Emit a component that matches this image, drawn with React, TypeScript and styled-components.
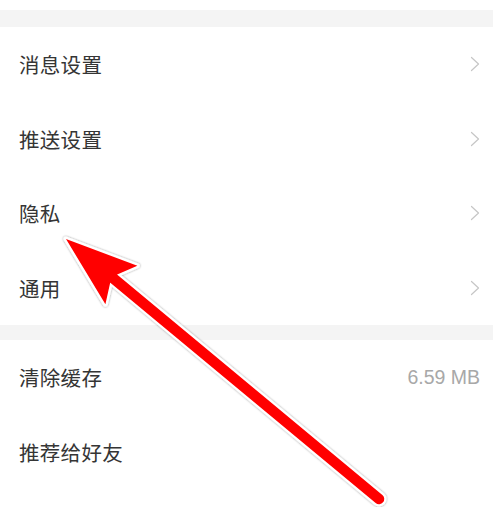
import React, { FC } from "react";
import styled, { createGlobalStyle } from "styled-components";

const GlobalStyle = createGlobalStyle`
  html, body {
    margin: 0;
    padding: 0;
    background: #ffffff;
  }
  body {
    font-family: "Noto Sans CJK SC", "Noto Sans", "Liberation Sans", sans-serif;
    -webkit-font-smoothing: antialiased;
  }
`;

interface Item {
  label: string;
  value?: string;
}

const groups: Item[][] = [
  [{ label: "消息设置" }, { label: "推送设置" }, { label: "隐私" }, { label: "通用" }],
  [{ label: "清除缓存", value: "6.59 MB" }, { label: "推荐给好友" }],
];

const Chevron: FC = () => (
  <svg width="10" height="16" viewBox="0 0 10 16">
    <polyline
      points="1.5,1.5 8.5,8 1.5,14.5"
      fill="none"
      stroke="#c6c6c6"
      strokeWidth="1.2"
      strokeLinecap="round"
      strokeLinejoin="round"
    />
  </svg>
);

// red annotation arrow drawn over the list
const tip = { x: 66, y: 239 };
const tail = { x: 379, y: 499 };
const dx = tail.x - tip.x;
const dy = tail.y - tip.y;
const len = Math.hypot(dx, dy);
const ux = dx / len;
const uy = dy / len;
const nx = -uy;
const ny = ux;
const pt = (along: number, side: number) =>
  `${tip.x + ux * along + nx * side},${tip.y + uy * along + ny * side}`;
const headPoints = [
  pt(0, 0),
  pt(72, -25),
  pt(62, -5.5),
  pt(62, 5.5),
  pt(72, 25),
].join(" ");
const shaftStart = { x: tip.x + ux * 60, y: tip.y + uy * 60 };

const Arrow: FC = () => (
  <ArrowLayer width="493" height="507" viewBox="0 0 493 507">
    <defs>
      <filter id="shade" x="-10%" y="-10%" width="120%" height="120%">
        <feDropShadow dx="0" dy="0" stdDeviation="1.2" floodColor="#000" floodOpacity="0.45" />
      </filter>
    </defs>
    <g filter="url(#shade)">
      <line
        x1={shaftStart.x}
        y1={shaftStart.y}
        x2={tail.x}
        y2={tail.y}
        stroke="#ffffff"
        strokeWidth="15"
        strokeLinecap="round"
      />
      <polygon points={headPoints} fill="#ffffff" stroke="#ffffff" strokeWidth="5" strokeLinejoin="round" />
    </g>
    <line
      x1={shaftStart.x}
      y1={shaftStart.y}
      x2={tail.x}
      y2={tail.y}
      stroke="#ff0000"
      strokeWidth="10.5"
      strokeLinecap="round"
    />
    <polygon points={headPoints} fill="#ff0000" />
  </ArrowLayer>
);

const App: FC = () => (
  <>
    <GlobalStyle />
    <Page>
      <TopSpace />
      {groups.map((group, gi) => (
        <React.Fragment key={`group-${gi}`}>
          <Gap $height={gi === 0 ? 17 : 15} />
          <List>
            {group.map((item) => (
              <Row key={item.label}>
                <Label>{item.label}</Label>
                {item.value ? <Value>{item.value}</Value> : gi === 0 ? <Chevron /> : null}
              </Row>
            ))}
          </List>
        </React.Fragment>
      ))}
      <Arrow />
    </Page>
  </>
);

const Page = styled.div`
  position: relative;
  width: 493px;
  height: 507px;
  overflow: hidden;
  background: #ffffff;
`;

const TopSpace = styled.div`
  height: 10px;
  background: #ffffff;
`;

const Gap = styled.div<{ $height: number }>`
  height: ${(p) => p.$height}px;
  background: #f4f4f4;
`;

const List = styled.ul`
  margin: 0;
  padding: 0;
  list-style: none;
  background: #ffffff;
`;

const Row = styled.li`
  height: 74.5px;
  display: flex;
  align-items: center;
  justify-content: space-between;
  padding: 0 13px 0 19px;
`;

const Label = styled.span`
  font-size: 20.5px;
  color: #353535;
  letter-spacing: 0.3px;
`;

const Value = styled.span`
  font-family: "Liberation Sans", "Noto Sans", sans-serif;
  font-size: 19.5px;
  color: #a8a8a8;
`;

const ArrowLayer = styled.svg`
  position: absolute;
  top: 0;
  left: 0;
  pointer-events: none;
`;

export default App;
